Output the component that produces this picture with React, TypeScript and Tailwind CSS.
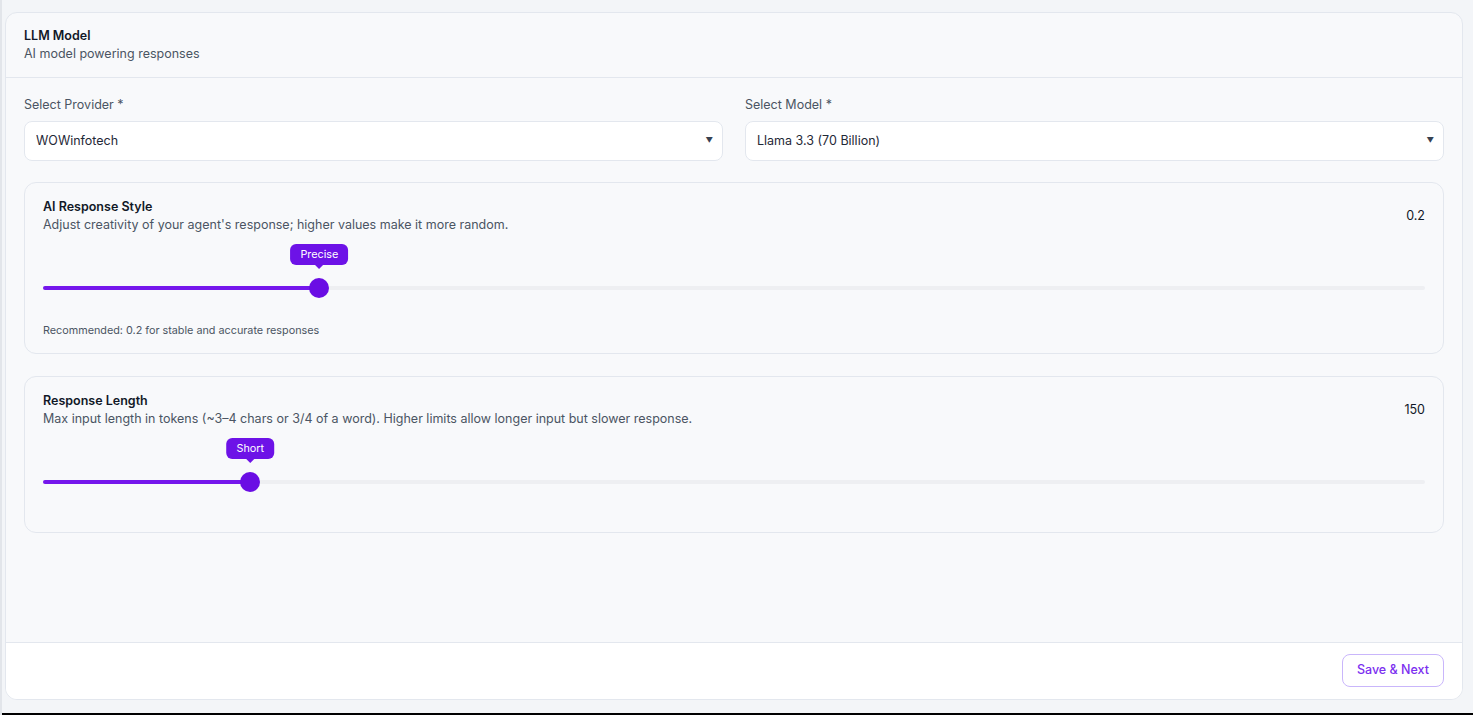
import React, { useState } from 'react';

type SliderCardProps = {
    title: string;
    description: string;
    value: number;
    min: number;
    max: number;
    display: string;
    badge: string;
    hint?: string;
};

const SliderCard: React.FC<SliderCardProps> = ({ title, description, value, min, max, display, badge, hint }) => {
    const pct = ((value - min) / (max - min)) * 100;

    return (
        <div className={`rounded-xl border border-[#e3e7ee] bg-[#f8f9fb] px-[18px] pt-4 ${hint ? 'pb-[14px]' : 'pb-10'}`}>
            <div className="flex items-center justify-between">
                <div>
                    <h3 className="text-[12.5px] leading-4 font-semibold text-[#111827]">{title}</h3>
                    <p className="mt-[2px] text-[12.5px] leading-4 text-[#4b5563]">{description}</p>
                </div>
                <span className="text-[12.5px] text-[#111827]">{display}</span>
            </div>

            <div className="relative mt-[11px] pt-[34px]">
                {/* floating label above the thumb */}
                <div
                    className="absolute top-0 -translate-x-1/2 flex flex-col items-center"
                    style={{ left: `${pct}%` }}
                >
                    <div className="h-[21px] px-[10px] rounded-md bg-[#6d12e7] text-white text-[10.8px] leading-[21px] whitespace-nowrap">
                        {badge}
                    </div>
                    <div className="w-0 h-0 border-l-[4px] border-r-[4px] border-t-[4px] border-l-transparent border-r-transparent border-t-[#6d12e7]" />
                </div>

                <div className="relative h-5 flex items-center">
                    <div className="w-full h-1 rounded-full bg-[#eeeff2]" />
                    <div className="absolute left-0 h-1 rounded-full bg-[#7517ec]" style={{ width: `${pct}%` }} />
                    <div
                        className="absolute w-5 h-5 -translate-x-1/2 rounded-full bg-[#6a0de4]"
                        style={{ left: `${pct}%` }}
                    />
                </div>
            </div>

            {hint && <p className="mt-[25px] text-[10.8px] leading-4 text-[#4b5563]">{hint}</p>}
        </div>
    );
};

const SelectField: React.FC<{ label: string; value: string; options: string[]; onChange: (v: string) => void }> = ({ label, value, options, onChange }) => (
    <div className="flex-1">
        <label className="block text-[12.5px] leading-[18px] text-[#4b5563] mb-[7px]">{label}</label>
        <div className="relative">
            <select
                value={value}
                onChange={(e) => onChange(e.target.value)}
                className="appearance-none w-full h-10 rounded-lg border border-[#e3e7ee] bg-white pl-[11px] pr-8 text-[12.5px] text-[#1f2937] outline-none"
            >
                {options.map((o) => (
                    <option key={o}>{o}</option>
                ))}
            </select>
            <span className="pointer-events-none absolute right-[10px] top-1/2 -translate-y-1/2 text-[7.5px] text-[#374151]">▼</span>
        </div>
    </div>
);

export default function App() {
    const [provider, setProvider] = useState('WOWinfotech');
    const [model, setModel] = useState('Llama 3.3 (70 Billion)');

    return (
        <div className="h-[715px] flex flex-col bg-[#f3f5f8] border-l-2 border-[#e2e5ea]" style={{ fontFamily: 'Inter, "Noto Sans", sans-serif' }}>
            <div className="flex-1 pt-3 pl-[3px] pr-[10px] pb-[13px] flex">
                <div className="flex-1 flex flex-col rounded-xl border border-[#e3e7ee] bg-[#f8f9fb] overflow-hidden">
                    <div className="px-[18px] pt-[14px] pb-[14px] border-b border-[#e3e7ee]">
                        <h2 className="text-[12.5px] leading-[18px] font-semibold text-[#111827]">LLM Model</h2>
                        <p className="text-[12.5px] leading-[18px] text-[#4b5563]">AI model powering responses</p>
                    </div>

                    <div className="flex-1 px-[18px] pt-[18px]">
                        <div className="flex gap-[22px]">
                            <SelectField label="Select Provider *" value={provider} options={['WOWinfotech', 'OpenAI', 'Anthropic']} onChange={setProvider} />
                            <SelectField label="Select Model *" value={model} options={['Llama 3.3 (70 Billion)', 'Llama 3.1 (8 Billion)']} onChange={setModel} />
                        </div>

                        <div className="mt-[21px] flex flex-col gap-[22px]">
                            <SliderCard
                                title="AI Response Style"
                                description="Adjust creativity of your agent's response; higher values make it more random."
                                value={0.2}
                                min={0}
                                max={1}
                                display="0.2"
                                badge="Precise"
                                hint="Recommended: 0.2 for stable and accurate responses"
                            />
                            <SliderCard
                                title="Response Length"
                                description="Max input length in tokens (~3–4 chars or 3/4 of a word). Higher limits allow longer input but slower response."
                                value={150}
                                min={0}
                                max={1000}
                                display="150"
                                badge="Short"
                            />
                        </div>
                    </div>

                    <div className="h-[57px] bg-white border-t border-[#e3e7ee] flex items-start justify-end pt-[11px] pr-[18px]">
                        <button className="h-[33px] px-[14px] rounded-lg border border-[#c9b6fb] bg-white text-[12.5px] font-medium text-[#7c2ff0]">
                            Save &amp; Next
                        </button>
                    </div>
                </div>
            </div>
            <div className="h-[2px] bg-black" />
        </div>
    );
}
